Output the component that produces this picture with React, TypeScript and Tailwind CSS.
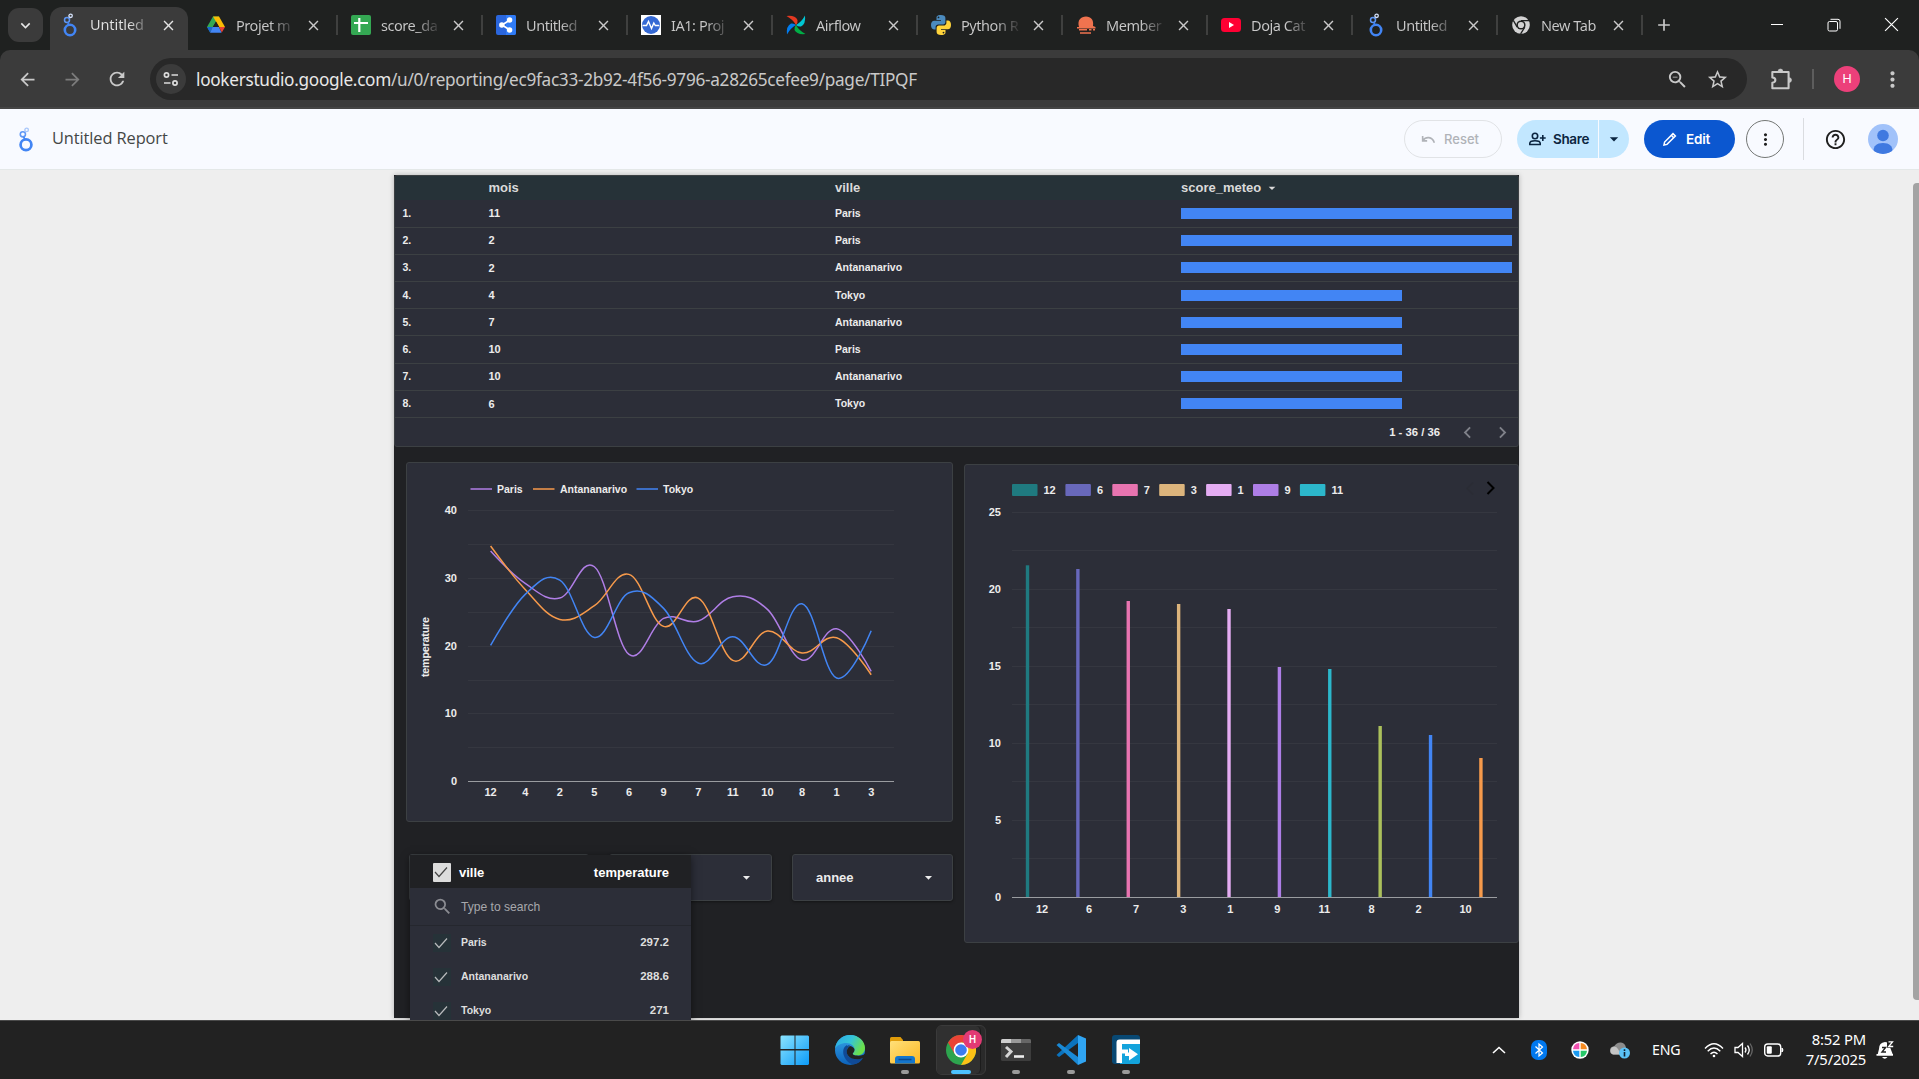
import React from "react";
import {
  MdArrowBack, MdArrowForward, MdRefresh, MdStarBorder, MdMoreVert, MdZoomOut,
  MdClose, MdAdd, MdArrowDropDown, MdHelpOutline, MdSearch,
  MdKeyboardArrowDown, MdChevronLeft, MdChevronRight,
} from "react-icons/md";

const UI = "font-['Noto_Sans','Open_Sans',sans-serif]";
const ARIAL = "font-['Liberation_Sans',Arial,sans-serif]";

function LookerLogo({ className, light }: { className: string; light?: boolean }) {
  return (
    <svg viewBox="0 0 16 24" className={className} fill="none">
      <circle cx="8" cy="17" r="5.2" stroke="#4285f4" strokeWidth="2.6" />
      <circle cx="5" cy="7" r="2.5" stroke="#5e97f6" strokeWidth="1.5" />
      <path d="M5.8 9.4 7 12" stroke="#4285f4" strokeWidth="1.6" />
      <circle cx="8.6" cy="2.8" r="1.7" stroke={light ? "#a8c7fa" : "#d6e3fc"} strokeWidth="1.3" />
    </svg>
  );
}

function DriveIcon() {
  return (
    <svg viewBox="0 0 20 20" className="size-5">
      <path d="M7 1.5h6l-3 5.2L4 17 1 12z" fill="#34a853" />
      <path d="M7 1.5h6L19 12h-6z" fill="#fbbc04" />
      <path d="M1 12h5.7L4 17.6z" fill="#1967d2" />
      <path d="M6.7 12H13l2.6 5.8H4z" fill="#4285f4" />
      <path d="M13 12h6l-3.2 5.6z" fill="#ea4335" />
      <path d="M10 6.6 13.2 12H6.8z" fill="#1f2120" />
    </svg>
  );
}
function SheetIcon() {
  return (
    <svg viewBox="0 0 20 20" className="size-5">
      <rect width="20" height="20" rx="2" fill="#34a853" />
      <path d="M8.3 3v14M3 8h14" stroke="#fff" strokeWidth="2.2" />
    </svg>
  );
}
function ShareNodeIcon() {
  return (
    <svg viewBox="0 0 20 20" className="size-5">
      <rect width="20" height="20" rx="2" fill="#2a66dd" />
      <path d="M10 0h8a2 2 0 0 1 2 2v16a2 2 0 0 1-2 2h-8z" fill="#2f7bf6" />
      <path d="M13.5 5.2 6 10l7.5 4.8" stroke="#fff" strokeWidth="1.7" fill="none" />
      <circle cx="13.6" cy="5" r="2.7" fill="#fff" /><circle cx="5.8" cy="10" r="2.7" fill="#fff" /><circle cx="13.6" cy="15" r="2.7" fill="#fff" />
    </svg>
  );
}
function PulseIcon() {
  return (
    <svg viewBox="0 0 20 20" className="size-5">
      <rect width="20" height="20" fill="#fff" />
      <circle cx="10" cy="10" r="9" fill="#3569d4" />
      <path d="M1.5 10.5h4l2-4 3 7 2.3-5.5 1.5 2.5h4" stroke="#fff" strokeWidth="1.4" fill="none" />
    </svg>
  );
}
function AirflowIcon() {
  return (
    <svg viewBox="0 0 20 20" className="size-5">
      <path d="M.5 1Q9 0 11.500 5 12 8 10 10 7 4.500.5 1z" fill="#e43921" />
      <path d="M19 .5Q20 9 15 11.500 12 12 10 10 15.500 7 19 .5z" fill="#00c7d4" />
      <path d="M19.500 19Q11 20 8.500 15 8 12 10 10 13 15.500 19.500 19z" fill="#00ad46" />
      <path d="M1 19.500Q0 11 5 8.500 8 8 10 10 4.500 13 1 19.500z" fill="#017cee" />
      <circle cx="10" cy="10" r="0.900" fill="#51504f" />
    </svg>
  );
}
function PythonIcon() {
  return (
    <svg viewBox="0 0 20 20" className="size-5">
      <path d="M9.9 0C5.6 0 5.500 1.900 5.500 3v2H10v.7H3.200C1.200 5.700 0 7.300 0 10s1.200 4.400 3 4.400h1.600v-2.300c0-1.500 1.300-2.600 2.700-2.600h4.700c1.400 0 2.400-1.100 2.400-2.500V3c0-2-1.500-3-4.500-3zM7.500 1.500a.9.900 0 1 1 0 1.800.9.900 0 0 1 0-1.800z" fill="#4b8bbe" />
      <path d="M10.100 20c4.300 0 4.400-1.900 4.400-3v-2H10v-.7h6.800c2 0 3.200-1.600 3.200-4.300s-1.200-4.400-3-4.400h-1.600v2.300c0 1.500-1.300 2.600-2.700 2.600H8c-1.400 0-2.400 1.100-2.400 2.500V17c0 2 1.500 3 4.500 3zm2.400-1.500a.9.900 0 1 1 0-1.800.9.900 0 0 1 0 1.800z" fill="#ffd43b" />
    </svg>
  );
}
function MemberIcon() {
  return (
    <svg viewBox="0 0 20 20" className="size-5">
      <path d="M3 12C1 5 5 1.500 10 1.500S18 5 17 11l2.500 1v1.500H1V12z" fill="#f0734f" />
      <path d="M3 14.700h8M13 14.700h2.500M17 14.700h2M4 18h11" stroke="#f0734f" strokeWidth="1.600" />
    </svg>
  );
}
function YoutubeIcon() {
  return (
    <svg viewBox="0 0 20 20" className="size-5">
      <rect y="3" width="20" height="14" rx="3.500" fill="#ff0033" />
      <path d="M8 7v6l5-3z" fill="#fff" />
    </svg>
  );
}
function ChromeGrey() {
  return (
    <svg viewBox="0 0 20 20" className="size-5">
      <circle cx="10" cy="10" r="8.800" fill="#d2d2d2" />
      <circle cx="10" cy="10" r="4.600" fill="#1f2120" />
      <circle cx="10" cy="10" r="3.100" fill="#d2d2d2" />
      <path d="M10 5.700h8.200M6.200 12.100 2.300 5.400M13.800 12.200 9.600 18.900" stroke="#1f2120" strokeWidth="1.300" />
    </svg>
  );
}
function ExtensionIcon() {
  return (
    <svg viewBox="0 0 24 24" className="ml-[21px] size-[26px]" fill="none" stroke="currentColor" strokeWidth="1.900" strokeLinejoin="round">
      <path d="M4 5.500h15v15H4v-5q2.800-.3 2.800-2.500T4 10.500z" />
      <path d="M9.300 5a2.200 2.200 0 0 1 4.400 0zM19.500 10.800a2.200 2.200 0 0 1 0 4.400z" fill="currentColor" strokeWidth="0.600" />
    </svg>
  );
}

const tabs: { title: string; icon: React.ReactNode }[] = [
  { title: "Projet m", icon: <DriveIcon /> },
  { title: "score_da", icon: <SheetIcon /> },
  { title: "Untitled", icon: <ShareNodeIcon /> },
  { title: "IA1: Proj", icon: <PulseIcon /> },
  { title: "Airflow", icon: <AirflowIcon /> },
  { title: "Python R", icon: <PythonIcon /> },
  { title: "Member", icon: <MemberIcon /> },
  { title: "Doja Cat", icon: <YoutubeIcon /> },
  { title: "Untitled", icon: <LookerLogo className="h-6 w-5" /> },
  { title: "New Tab", icon: <ChromeGrey /> },
];

function TabTitle({ title }: { title: string }) {
  const solid = title === "Airflow" || title === "New Tab";
  return (
    <span className={`ml-[10px] w-[63px] shrink-0 bg-clip-text pt-px text-[14.5px] tracking-[-0.45px] whitespace-nowrap text-transparent ${solid ? "bg-[#c9c9c9]" : "bg-linear-to-r from-[#c9c9c9] from-55% to-[#333] to-92%"}`}>
      {title}
    </span>
  );
}

function TabStrip() {
  return (
    <div className="flex h-[50px] items-center bg-[#1f2120] text-[#c9c9c9]">
      <div className="ml-2 flex h-[34px] w-[35px] shrink-0 items-center justify-center rounded-[11px] bg-[#3b3b3b] text-[#e8e8e8]">
        <MdKeyboardArrowDown className="size-[19px]" />
      </div>
      <div className="ml-[7px] flex h-[43px] w-[138px] shrink-0 items-center self-end rounded-t-[12px] bg-[#3b3b3b] pb-[7px] pl-[10px] text-[#e3e3e3]">
        <span className="flex w-5 justify-center"><LookerLogo className="h-6 w-5" /></span>
        <span className="ml-[10px] w-[60px] bg-linear-to-r from-[#e3e3e3] from-65% to-[#777] to-90% bg-clip-text text-[14.5px] tracking-[-0.1px] whitespace-nowrap text-transparent">Untitled</span>
        <MdClose className="ml-[10px] size-[17px]" />
      </div>
      <div className="ml-[18px] flex">
        {tabs.map((t, i) => (
          <div key={i} className="flex h-[26px] w-[145px] items-center">
            <span className="flex w-5 shrink-0 justify-center">{t.icon}</span>
            <TabTitle title={t.title} />
            <MdClose className="ml-[6px] size-[17px] shrink-0" />
            <span className="ml-[14px] h-5 w-[2px] bg-[#3f403f]" />
          </div>
        ))}
      </div>
      <MdAdd className="ml-[-2px] size-[20px]" />
      <div className="mr-5 ml-auto flex items-center pb-px text-white">
        <svg viewBox="0 0 14 14" className="size-[14px]"><path d="M1 6.500h12" stroke="currentColor" /></svg>
        <svg viewBox="0 0 14 14" className="ml-[43px] size-[14px]" fill="none" stroke="currentColor"><rect x="1" y="3.500" width="9.500" height="9.500" rx="1.500" /><path d="M3.500 1.300H11a2 2 0 0 1 2 2v7.500" /></svg>
        <svg viewBox="0 0 14 14" className="ml-[43px] size-[15px]"><path d="m1 1 12 12M13 1 1 13" stroke="currentColor" strokeWidth="1.100" /></svg>
      </div>
    </div>
  );
}

function Toolbar() {
  return (
    <div className="bg-[#1f2120]">
      <div className="flex h-[59px] items-center rounded-t-[10px] border-b-2 border-[#454545] bg-[#3b3b3b] pt-px text-[#c9c9c9]">
        <MdArrowBack className="ml-[17px] size-[21px]" />
        <MdArrowForward className="ml-[24px] size-[21px] text-[#7c7c7c]" />
        <MdRefresh className="ml-[23px] size-[22px]" />
        <div className="ml-[22px] flex h-[42px] w-[1597px] items-center rounded-full bg-[#282828] pl-[6px]">
          <span className="flex size-[30px] items-center justify-center rounded-full bg-[#3b3b3b]">
            <svg viewBox="0 0 18 18" className="size-[18px]" fill="none" stroke="#dcdcdc" strokeWidth="1.700"><circle cx="4.500" cy="5" r="2.100" /><path d="M9.500 5H16M2 13h6.500" /><circle cx="13" cy="13" r="2.100" /></svg>
          </span>
          <span className="ml-[10px] w-[722px] pt-px text-[17.2px] tracking-[-0.29px] whitespace-nowrap"><span className="text-[#e8e8e8]">lookerstudio.google.com</span>/u/0/reporting/ec9fac33-2b92-4f56-9796-a28265cefee9/page/TIPQF</span>
          <MdZoomOut className="ml-auto size-[23px]" />
          <MdStarBorder className="mr-[18px] ml-[17px] size-[23px]" />
        </div>
        <ExtensionIcon />
        <span className="ml-[18px] h-5 w-[2px] bg-[#5d5d5d]" />
        <span className="ml-[20px] flex size-[26px] items-center justify-center rounded-full bg-[#ec407a] text-[13px] text-white">H</span>
        <MdMoreVert className="mr-[14px] ml-auto size-[25px]" />
      </div>
    </div>
  );
}

function ReportHeader() {
  return (
    <div className="flex h-[61px] items-center border-b border-[#e4e8e8] bg-[#f8faff] font-['Open_Sans','Noto_Sans',sans-serif] text-[#1f1f1f]">
      <LookerLogo className="ml-[16px] h-[25px] w-5" light />
      <span className="ml-[16px] w-[130px] pb-[2px] text-[16.4px] font-normal tracking-[-0.1px] whitespace-nowrap text-[#444746]">Untitled Report</span>
      <div className="ml-auto flex h-[38px] w-[98px] items-center rounded-full border border-[#e1e3e6] pl-[16px] font-['Inter',sans-serif] text-[13px] font-medium text-[#b0b3b8]">
        <svg viewBox="0 0 16 10" className="mr-[8px] h-[9px] w-[15px]" fill="none" stroke="currentColor" strokeWidth="1.800"><path d="M1.500 1v5.500h5M2 6c3-4.500 10-4.500 12.500 2.500" /></svg>
        <span className="pt-px leading-none">Reset</span>
      </div>
      <div className="ml-[15px] flex h-[38px] w-[112px] items-center rounded-full bg-[#c2e7ff] font-['Inter',sans-serif] text-[13.5px] font-semibold text-[#0b2540]">
        <svg viewBox="0 0 18 18" className="ml-[11px] size-[18px]" fill="none" stroke="currentColor" strokeWidth="1.600"><circle cx="7" cy="6" r="2.700" /><path d="M1.800 14.500v-1.200q0-2.600 5.200-2.600t5.200 2.600v1.200zM14.800 5v6M11.900 8h5.800" /></svg>
        <span className="ml-[7px] w-[45px] tracking-[-0.35px]">Share</span>
        <span className="h-full w-px bg-[#f8faff]" />
        <MdArrowDropDown className="ml-[5px] size-[20px]" />
      </div>
      <div className="ml-[15px] flex h-[38px] w-[91px] items-center rounded-full bg-[#0b57d0] font-['Inter',sans-serif] text-[13.5px] font-semibold text-white">
        <svg viewBox="0 0 16 16" className="ml-[18px] size-[16px]" fill="none" stroke="currentColor" strokeWidth="1.500"><path d="m2 14 .6-3L11 2.600l2.400 2.400L5 13.400zM9.300 4.300l2.400 2.400" /></svg>
        <span className="ml-[8px] tracking-[-0.2px]">Edit</span>
      </div>
      <div className="ml-[11px] flex size-[38px] items-center justify-center rounded-full border border-[#747775]"><MdMoreVert className="size-[19px]" /></div>
      <span className="ml-[19px] h-[42px] w-px bg-[#dadce0]" />
      <MdHelpOutline className="ml-[20px] size-[23px]" />
      <svg viewBox="0 0 30 30" className="mr-[21px] ml-[21px] size-[30px]"><clipPath id="avatar"><circle cx="15" cy="15" r="15" /></clipPath><g clipPath="url(#avatar)"><rect width="30" height="30" fill="#a1c2fa" /><circle cx="15" cy="11.500" r="5.800" fill="#3f79e0" /><path d="M5.500 27c0-5 3-8 9.500-8s9.500 3 9.500 8l-3 3h-13z" fill="#3f79e0" /></g></svg>
    </div>
  );
}

const rows: [string, string, number][] = [
  ["11", "Paris", 3], ["2", "Paris", 3], ["2", "Antananarivo", 3], ["4", "Tokyo", 2],
  ["7", "Antananarivo", 2], ["10", "Paris", 2], ["10", "Antananarivo", 2], ["6", "Tokyo", 2],
];

function ScoreTable() {
  return (
    <div className="h-[272px] overflow-hidden rounded-[3px] border border-[#3c4043] bg-[#2c2e38] font-bold text-[#ececec]">
      <div className="grid h-[24.4px] grid-cols-[93.5px_346.5px_1fr] items-center bg-[#263238] text-[13px] text-[#dadada]">
        <span />
        <span>mois</span>
        <span className="flex items-center"><span className="w-[346px]">ville</span><span>score_meteo</span><MdArrowDropDown className="ml-[3px] size-[16px]" /></span>
      </div>
      {rows.map(([m, v, n], i) => (
        <div key={i} className="grid h-[27.2px] grid-cols-[93.5px_346.5px_346px_331px] items-center border-b border-[#3c4043] text-[10.5px]">
          <span className="pt-px pl-[7.5px]">{i + 1}.</span>
          <span className="text-[11px]">{m}</span>
          <span className="pt-px">{v}</span>
          <span className="h-[11px] bg-[#4285f4]" style={{ width: n === 3 ? 331 : 221 }} />
        </div>
      ))}
      <div className="flex h-[29px] items-center justify-end pr-[4px] text-[11.3px]">
        <span className="mr-[16px] pt-px">1 - 36 / 36</span>
        <MdChevronLeft className="size-[23px] text-[#7e8088]" />
        <MdChevronRight className="ml-[12px] size-[23px] text-[#7e8088]" />
      </div>
    </div>
  );
}

const X0 = 83.6;
const STEP = 34.6;
const series = [
  { name: "Paris", color: "#b07ee6", y: [287, 384, 428, 334, 597, 489, 497, 424, 462, 614, 520, 648] },
  { name: "Antananarivo", color: "#f79a4b", y: [272, 402, 492, 451, 357, 513, 428, 615, 527, 593, 547, 658] },
  { name: "Tokyo", color: "#4285f4", y: [570, 417, 374, 546, 412, 459, 623, 544, 627, 445, 668, 526] },
];

function smooth(raw: number[]) {
  const p = raw.map((v, i) => [X0 + i * STEP, v / 3 - 7.6]);
  let d = `M${p[0][0]} ${p[0][1]}`;
  for (let i = 0; i < p.length - 1; i++) {
    const a = p[Math.max(0, i - 1)], b = p[i], c = p[i + 1], e = p[Math.min(p.length - 1, i + 2)];
    const k = 0.19;
    const o1 = i === 0 ? 0 : k, o2 = i === p.length - 2 ? 0 : k;
    d += `C${b[0] + (c[0] - a[0]) * o1} ${b[1] + (c[1] - a[1]) * o1} ${c[0] - (e[0] - b[0]) * o2} ${c[1] - (e[1] - b[1]) * o2} ${c[0]} ${c[1]}`;
  }
  return d;
}

function LineChart() {
  const cats = ["12", "4", "2", "5", "6", "9", "7", "11", "10", "8", "1", "3"];
  return (
    <svg viewBox="0 0 545 358" className="h-[358px] w-[545px]" fontWeight="bold" fill="#ececec">
      {series.map((s, i) => (
        <g key={s.name}>
          <path d={`M${[63.5, 126, 229.5][i]} 26h21.500`} stroke={s.color} strokeWidth="1.500" />
          <text x={[90, 153, 256][i]} y="29.500" fontSize="10.500">{s.name}</text>
        </g>
      ))}
      {[0, 1, 2, 3, 4, 5, 6, 7].map((i) => <path key={i} d={`M61 ${Math.round(47 + i * 33.9) + 0.5}h426`} stroke="#353740" />)}
      <path d="M61 318.500h426" stroke="#9a9ca0" />
      {[40, 30, 20, 10, 0].map((v, i) => <text key={v} x="50" y={51 + i * 67.8} fontSize="11" textAnchor="end">{v}</text>)}
      {cats.map((c, i) => <text key={c} x={X0 + i * STEP} y="333" fontSize="11" textAnchor="middle">{c}</text>)}
      <text transform="translate(22 184) rotate(-90)" fontSize="10.800" textAnchor="middle" textLength="60">temperature</text>
      {series.map((s) => <path key={s.name} d={smooth(s.y)} fill="none" stroke={s.color} strokeWidth="1.500" />)}
    </svg>
  );
}

const bars: [string, number, string][] = [
  ["12", 565.3, "#1f7a80"], ["6", 569, "#6868bb"], ["7", 601, "#e874b0"], ["3", 604, "#dcb47c"], ["1", 609, "#e4acf2"],
  ["9", 667, "#ae7ee6"], ["11", 669, "#2cb7cb"], ["8", 726, "#abc05c"], ["2", 735, "#4285f4"], ["10", 758, "#f79a4b"],
];

function BarChart() {
  return (
    <svg viewBox="0 0 553 478" className="h-[478px] w-[553px]" fontSize="11" fontWeight="bold" fill="#ececec">
      {bars.slice(0, 7).map(([n, , c], i) => {
        const x = i === 0 ? 47 : 53.5 + i * 46.9;
        return <g key={n}><rect x={x} y="19" width="25.500" height="12" rx="1" fill={c} /><text x={x + 31.5} y="28.500">{n}</text></g>;
      })}
      <path d="m508 17.500-6 6 6 6" fill="none" stroke="#2a2c35" strokeWidth="1.300" />
      <path d="m522.500 17 6 6-6 6" fill="none" stroke="#000" strokeWidth="2" />
      {[0, 1, 2, 3, 4, 5, 6, 7, 8, 9].map((i) => <path key={i} d={`M47 ${Math.round(46.8 + i * 38.5) + 0.5}h485`} stroke="#353740" />)}
      {[25, 20, 15, 10, 5, 0].map((v, i) => <text key={v} x="36" y={51 + i * 77} textAnchor="end">{v}</text>)}
      {bars.map(([n, y, c], i) => (
        <g key={n}>
          <rect x={60.8 + i * 50.38} y={y - 465} width="3.400" height={897 - y} fill={c} />
          <text x={77 + i * 47.07} y="448" textAnchor="middle">{n}</text>
        </g>
      ))}
      <path d="M47 432.500h485" stroke="#9a9ca0" />
    </svg>
  );
}

const CARD = "rounded-[3px] border border-[#3c4043] bg-[#2c2e38]";

function Tick({ color }: { color: string }) {
  return <svg viewBox="0 0 14 12" className="mr-[2px] h-[12px] w-[14px]"><path d="m1 6 4 4.500L13 1.500" fill="none" stroke={color} strokeWidth="1.200" /></svg>;
}

function FilterMenu() {
  const items: [string, string][] = [["Paris", "297.2"], ["Antananarivo", "288.6"], ["Tokyo", "271"]];
  return (
    <div className="absolute top-[680px] left-[16px] h-[165px] w-[281px] overflow-hidden bg-[#2c2e38] shadow-[0_2px_8px_rgba(0,0,0,0.5)]">
      <div className="flex h-[33px] items-center bg-[#202124] pr-[22px] pl-[23px] text-[13px] font-bold text-white">
        <span className="mt-px flex h-[19px] w-[18px] items-center justify-center rounded-[1px] bg-[#dcdcdc]"><Tick color="#444" /></span>
        <span className="ml-[8px] pt-[2px]">ville</span>
        <span className="ml-auto pt-[2px]">temperature</span>
      </div>
      <div className="flex h-[38px] items-center border-b border-[#25272e] pl-[22px] text-[12.1px] text-[#a7a8ac]">
        <MdSearch className="size-[21px] text-[#8b8c92]" />
        <span className="ml-[8px] pt-px">Type to search</span>
      </div>
      {items.map(([n, v]) => (
        <div key={n} className="flex h-[34px] items-center pr-[22px] pl-[23px] text-[10.5px] font-bold text-[#dedede]">
          <span className="flex size-[18px] items-center justify-center bg-[#263238]"><Tick color="#b8babc" /></span>
          <span className="ml-[10px]">{n}</span>
          <span className="ml-auto text-[11.5px]">{v}</span>
        </div>
      ))}
    </div>
  );
}

function Report() {
  return (
    <div className={`relative ml-[394px] h-[843px] w-[1125px] bg-[#202124] shadow-[0_0_5px_rgba(0,0,0,0.25)] ${ARIAL}`}>
      <ScoreTable />
      <div className="flex">
        <div className="ml-[12px] w-[547px] pt-[15px]">
          <div className={`h-[360px] ${CARD}`}><LineChart /></div>
          <div className="mt-[32px] ml-[3px] flex h-[47px] text-[13px] font-bold text-[#ececec]">
            <div className={`w-[180px] ${CARD}`} />
            <div className={`ml-[20px] flex w-[163px] items-center justify-end pr-[16px] shadow-[0_1px_3px_rgba(0,0,0,0.4)] ${CARD}`}><MdArrowDropDown className="size-[17px]" /></div>
            <div className={`ml-auto flex w-[161px] items-center justify-between pr-[15px] pl-[23px] shadow-[0_1px_3px_rgba(0,0,0,0.4)] ${CARD}`}><span>annee</span><MdArrowDropDown className="size-[17px]" /></div>
          </div>
        </div>
        <div className={`mt-[17px] ml-[11px] h-[479px] w-[555px] overflow-hidden ${CARD}`}><BarChart /></div>
      </div>
      <FilterMenu />
    </div>
  );
}

function Dot({ active }: { active?: boolean }) {
  return active ? <span className="h-1 w-5 rounded-full bg-[#4cc2ff]" /> : <span className="h-1 w-2 rounded-full bg-[#9a9a9a]" />;
}

function TaskIcon({ children, mark }: { children: React.ReactNode; mark?: boolean }) {
  return (
    <div className="flex h-[50px] w-[55px] flex-col items-center pt-[10px]">
      <span className="size-[30px]">{children}</span>
      <span className="mt-[5px] flex">{mark && <Dot />}</span>
    </div>
  );
}

function Taskbar() {
  return (
    <div className={`flex h-[59px] border-t border-[#4a4a4a] bg-[#222222] text-white ${UI}`}>
      <div className="ml-[767px] flex pt-[4px]">
        <TaskIcon>
          <svg viewBox="0 0 30 30"><defs><linearGradient id="win" x1="0" y1="0" x2="1" y2="1"><stop stopColor="#8be4ff" /><stop offset="1" stopColor="#0c9bf8" /></linearGradient></defs><path d="M1.500.5H14.500V14H.5V1.500zM15.500.5h12.500l1 1V14H15.500zM.5 15.500H14.500V30H1.500l-1-1zM15.500 15.500h13.500V29l-1 1H15.500z" fill="url(#win)" /></svg>
        </TaskIcon>
        <TaskIcon>
          <svg viewBox="0 0 30 30">
            <defs><linearGradient id="e1" x1="0" y1="0" x2="1" y2=".4"><stop stopColor="#2ba8e8" /><stop offset=".55" stopColor="#35c4d8" /><stop offset="1" stopColor="#6be04c" /></linearGradient><linearGradient id="e2" x1="0" y1="0" x2="0" y2="1"><stop stopColor="#35a5ea" /><stop offset="1" stopColor="#0c62ba" /></linearGradient></defs>
            <circle cx="15" cy="15" r="15" fill="url(#e2)" />
            <path d="M0 14C1 5 8 0 15 0c9 0 15 6.500 15 13 0 5-4 7.500-8 7.500-3 0-5-1-4-2.500 1-1 1.500-2 1.500-3.500C19.500 11 16 8 11.500 8 6 8 1.500 10.500 0 14z" fill="url(#e1)" />
            <path d="M12 10C8 12 7.500 17 9 21c2 5 6 8.500 10.500 8.300 3-.3 7-3.300 8.500-6.300-3 1.600-8 2-12 0-4-2-5-6-3.500-9.500.6-1.500 1.500-2.500 2.500-2.800-1-.5-2-.5-3 .3z" fill="#104a96" />
            <path d="M15 11c-3 2-4.500 6-2 9.500 3 4 10 5 15 2.500 1-.5 1.500 0 1 1l2-1v-5c-3 3-7 3-9 2.500-3 0-5-1-4-2.500 1-1 1.500-2 1.500-3.500 0-1.500-2-3-4.500-3.500z" fill="#222" />
          </svg>
        </TaskIcon>
        <TaskIcon mark>
          <svg viewBox="0 0 30 30"><defs><linearGradient id="fo" x1="0" y1="0" x2="1" y2="1"><stop stopColor="#ffe07a" /><stop offset="1" stopColor="#fdb924" /></linearGradient></defs><path d="M0 3.500Q0 2 1.500 2h9L13 5v5H0z" fill="#e09c0a" /><rect y="6" width="30" height="22.500" rx="1.500" fill="url(#fo)" /><path d="M5 28.500V24q0-3 3-3h14q3 0 3 3v4.500z" fill="#1476cc" /><path d="M8.500 24.500h13" stroke="#0a4a8f" strokeWidth="1.500" /></svg>
        </TaskIcon>
        <div className="ml-[4px] flex h-[50px] w-[50px] rounded-[6px] border border-[#3a3a3a] bg-[#2a2a2a]">
          <div className="relative flex h-[48px] w-[44px] flex-col items-center rounded-[5px] border-r border-[#1c1c1c] bg-[#303030] pt-[9px] pl-[5px]">
            <svg viewBox="0 0 30 30" className="size-[30px] shrink-0"><circle cx="15" cy="15" r="15" fill="#2da44e" /><path d="M2 7.500A15 15 0 0 1 28 7.500H15L8.500 18.800z" fill="#ea4335" /><path d="M15 7.500h13A15 15 0 0 1 15 30l6.500-11.300z" fill="#fbc116" /><circle cx="15" cy="15" r="7.400" fill="#fff" /><circle cx="15" cy="15" r="5.800" fill="#3c7cf0" /></svg>
            <span className="mt-[5px] flex"><Dot active /></span>
            <span className="absolute top-[4px] right-[-2px] flex size-[19px] items-center justify-center rounded-full bg-[#e23a74] text-[10px] font-semibold">H</span>
          </div>
        </div>
        <div className="ml-[2px] flex">
          <TaskIcon mark>
            <svg viewBox="0 0 30 30"><rect y="4" width="30" height="22" rx="1.500" fill="#3d3d3d" /><path d="M0 8V5.500Q0 4 1.500 4H10v4z" fill="#cfcfcf" /><path d="M10 4h10v4H10z" fill="#999" /><path d="M20 4h8.500Q30 4 30 5.500V8H20z" fill="#666" /><path d="m5 12 5 4.500L5 22" fill="none" stroke="#d4d4d4" strokeWidth="3" /><path d="M13 21.500h10" stroke="#eee" strokeWidth="2.600" /></svg>
          </TaskIcon>
          <TaskIcon mark>
            <svg viewBox="0 0 30 30"><path d="m22 8-19 14-2.500-2L22 0z" fill="#0b73bd" /><path d="M22 22 3 8 .5 10 22 30z" fill="#1a8ad6" /><path d="M22 0 30 3.500v23L22 30z" fill="#30a5f3" /></svg>
          </TaskIcon>
          <TaskIcon mark>
            <svg viewBox="0 0 30 30"><rect x="1" y="0" width="28" height="29" rx="3" fill="#084873" /><path d="M9 9h20v18q0 2-2 2H9z" fill="#13a3dc" /><path d="M5.500 28V7.500Q5.500 4.500 8.500 4.500H29V9H11v5.500h6v4h-6V28z" fill="#fff" /><path d="M14 17.500h4V13l9 6.200-9 6.300V21h-4z" fill="#fff" /></svg>
          </TaskIcon>
        </div>
      </div>
      <div className="mr-[25px] ml-auto flex items-center">
        <svg viewBox="0 0 14 8" className="h-[8px] w-[14px]"><path d="m1 7 6-5.500L13 7" fill="none" stroke="#fff" strokeWidth="1.600" /></svg>
        <svg viewBox="0 0 16 20" className="ml-[25px] h-[20px] w-[16px]"><rect width="16" height="20" rx="7" fill="#0078ee" /><path d="m4.500 6.500 7 6.500L8 16V4l3.500 3-7 6.500" fill="none" stroke="#fff" strokeWidth="1.200" /></svg>
        <svg viewBox="0 0 18 18" className="ml-[24px] size-[18px]"><circle cx="9" cy="9" r="8.700" fill="#fff" /><path d="M8.300 2v6.300H2A7 7 0 0 1 8.300 2z" fill="#f050b0" /><path d="M9.700 2A7 7 0 0 1 16 8.300H9.700z" fill="#f58b22" /><path d="M2 9.700h6.300V16A7 7 0 0 1 2 9.700z" fill="#1a9af0" /><path d="M9.700 9.700H16A7 7 0 0 1 9.700 16z" fill="#25c767" /></svg>
        <svg viewBox="0 0 20 18" className="ml-[21px] h-[18px] w-[20px]"><path d="M4 13.500a4 4 0 0 1 0-8Q7 1 11 1.500t5 5l1 7z" fill="#8c8c8c" /><path d="M3 13.500Q0 12 .5 9T4 5.500q3 0 4 2.500l3 5.500z" fill="#c4c4c4" /><circle cx="14.500" cy="12" r="5.500" fill="#5ac2f7" /><path d="M14.500 11v4.500M14.500 8.300V10" stroke="#123" strokeWidth="1.600" /></svg>
        <span className="ml-[22px] w-[30px] text-[14.2px] tracking-[-0.2px]">ENG</span>
        <svg viewBox="0 0 20 16" className="ml-[22px] h-[16px] w-[20px]" fill="none" stroke="#fff" strokeWidth="1.400"><path d="M1 6.500q9-9.500 18 0M3.700 9.300q6.300-6.500 12.600 0M6.500 12q3.500-3.500 7 0" /><circle cx="10" cy="14" r="1.300" fill="#fff" stroke="none" /></svg>
        <svg viewBox="0 0 20 16" className="ml-[10px] h-[16px] w-[20px]" fill="none" stroke="#fff" strokeWidth="1.300"><path d="M1 5.500h3L8.500 1.500v13L4 10.500H1zM11 5.500q2 2.500 0 5M13.500 3.500q3.500 4.500 0 9" /><path d="M16 1.500q4.500 6.500 0 13" stroke="#666" /></svg>
        <svg viewBox="0 0 20 14" className="ml-[10px] h-[14px] w-[20px]"><rect x=".7" y="1" width="16" height="12" rx="3" fill="none" stroke="#fff" strokeWidth="1.400" /><rect x="2.800" y="3.200" width="5" height="7.600" rx="1" fill="#fff" /><path d="M18 5q2 2 0 4z" fill="#fff" stroke="#fff" /></svg>
        <div className="ml-[15px] w-[67px] pb-[2px] text-right text-[14.8px] leading-[20px] tracking-[-0.2px] whitespace-nowrap"><div>8:52 PM</div><div>7/5/2025</div></div>
        <svg viewBox="0 0 18 20" className="ml-[10px] h-[20px] w-[18px]"><path d="M1.500 15 3 9q0-6.500 6-7 5.500.5 5.500 6.500L17 15z" fill="#fff" /><path d="M.5 14h16.500v1.700H.5zM6 17h5.500q-2.800 3.500-5.500 0z" fill="#fff" /><path d="M6 7.500h3.600L6 12h4" fill="none" stroke="#222" strokeWidth="1.400" /><path d="M11 .5h6.500v7.300H11z" fill="#222" /><path d="M12.500 1.800h4L12.700 6.500h4.500" fill="none" stroke="#fff" strokeWidth="1.300" /></svg>
      </div>
    </div>
  );
}

export default function App() {
  return (
    <div className={`h-[1079px] w-[1919px] overflow-hidden bg-[#eeeeee] ${UI}`}>
      <TabStrip />
      <Toolbar />
      <ReportHeader />
      <div className="flex h-[850px] overflow-hidden bg-[#eeeeee] pt-[5px]">
        <Report />
        <div className="mt-[8px] ml-auto h-[817px] w-[6px] rounded-l-[4px] bg-[#a3a3a3]" />
      </div>
      <Taskbar />
    </div>
  );
}
